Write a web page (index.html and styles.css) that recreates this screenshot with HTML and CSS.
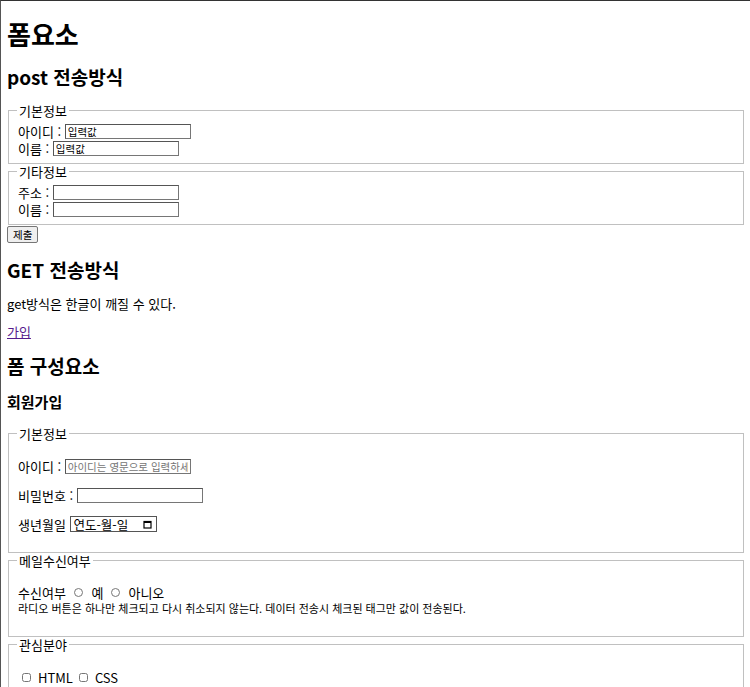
FILE: index.html
```html
<!DOCTYPE html>
<html lang="ko">
<head>
<meta charset="UTF-8">
<meta name="viewport" content="width=device-width, initial-scale=1.0">
<title>폼요소</title>
<link rel="stylesheet" href="styles.css">
</head>
<body>

<h1>폼요소</h1>

<h2>post 전송방식</h2>
<form class="form-post" action="#" method="post">
  <fieldset>
    <legend>기본정보</legend>
    <div class="row">아이디 : <input type="text" name="id" value="입력값" class="field"></div>
    <div class="row">이름 : <input type="text" name="name" value="입력값" class="field"></div>
  </fieldset>
  <fieldset>
    <legend>기타정보</legend>
    <div class="row">주소 : <input type="text" name="addr" class="field"></div>
    <div class="row">이름 : <input type="text" name="name2" class="field"></div>
  </fieldset>
  <input type="submit" value="제출" class="btn">
</form>

<h2>GET 전송방식</h2>
<p>get방식은 한글이 깨질 수 있다.</p>
<a href="#">가입</a>

<h2>폼 구성요소</h2>
<h3>회원가입</h3>
<form class="form-join" action="#">
  <fieldset>
    <legend>기본정보</legend>
    <p class="row">아이디 : <input type="text" name="userid" placeholder="아이디는 영문으로 입력하세요" class="field"></p>
    <p class="row">비밀번호 : <input type="password" name="userpw" class="field"></p>
    <p class="row">생년월일 <span class="date-box">연도-월-일<svg class="cal" width="9" height="9" viewBox="0 0 9 9"><rect x="1" y="1.5" width="7" height="6.5" fill="none" stroke="#000" stroke-width="1.2"/><rect x="1" y="1" width="7" height="2" fill="#000"/></svg></span></p>
  </fieldset>
  <fieldset>
    <legend>메일수신여부</legend>
    <div class="group">
      <div class="row">수신여부 <input type="radio" name="mail" value="yes" id="yes"><label for="yes">예</label> <input type="radio" name="mail" value="no" id="no"><label for="no">아니오</label></div>
      <div class="note">라디오 버튼은 하나만 체크되고 다시 취소되지 않는다. 데이터 전송시 체크된 태그만 값이 전송된다.</div>
    </div>
  </fieldset>
  <fieldset>
    <legend>관심분야</legend>
    <p class="row"><input type="checkbox" name="like" value="html" id="html"><label for="html">HTML</label> <input type="checkbox" name="like" value="css" id="css"><label for="css">CSS</label></p>
  </fieldset>
</form>

</body>
</html>
```

FILE: styles.css
```css
html {
  border-top: 1px solid #333;
  border-left: 1px solid #555;
  min-height: 100%;
}

body {
  margin: 0 5px 7px 6px;
  font-family: "Noto Sans CJK KR", "Noto Sans", sans-serif;
  font-size: 13px;
  line-height: 15px;
  color: #000;
}

h1 {
  font-size: 26px;
  line-height: 31px;
  margin: 17px 0;
}

h2 {
  font-size: 19px;
  line-height: 21px;
  margin: 16px 0;
}

h3 {
  font-size: 15px;
  line-height: 17px;
  margin: 17px 0 16px;
}

p {
  margin: 13px 0;
}

a {
  color: #551a8b;
}

fieldset {
  margin: 0 1px;
  padding: 5px 9px 6px 9px;
  border: 1px solid #c0c0c0;
}

legend {
  padding: 0 2px;
  margin-left: -1px;
}

.row {
  display: flex;
  align-items: center;
  height: 17px;
  white-space: pre;
}

.form-join .row {
  height: 16px;
}

.form-join fieldset {
  padding: 4px 9px 7px;
}

.group {
  margin: 12px 0 13px;
}

.field {
  box-sizing: border-box;
  width: 126px;
  height: 15px;
  padding: 0 2px;
  margin: 0;
  border: 1px solid #767676;
  border-top-color: #555;
  border-left-color: #555;
  font-family: "Noto Sans CJK KR", sans-serif;
  font-size: 10.5px;
}

.field::placeholder {
  color: #757575;
}

.btn {
  display: block;
  height: 17px;
  padding: 0 5px;
  margin: 1px 0 0 0;
  border: 1px solid #767676;
  border-radius: 2px;
  background-color: #efefef;
  font-family: "Noto Sans CJK KR", sans-serif;
  font-size: 10.5px;
  line-height: 12px;
}

.date-box {
  display: flex;
  align-items: center;
  justify-content: space-between;
  box-sizing: border-box;
  width: 87px;
  height: 16px;
  margin-left: 1px;
  padding: 0 4px 0 2px;
  border: 1px solid #555;
  font-size: 12.5px;
  white-space: nowrap;
}

.cal {
  display: block;
}

input[type=radio], input[type=checkbox] {
  width: 9px;
  height: 9px;
}

input[type=radio] {
  margin: 0 8px 0 5px;
}

label + input[type=radio] {
  margin-left: 8px;
}

input[type=checkbox] {
  margin: 0 7px 0 4px;
}

label + input[type=checkbox] {
  margin-left: 6px;
}

.note {
  font-size: 11px;
  line-height: 16px;
}
```
